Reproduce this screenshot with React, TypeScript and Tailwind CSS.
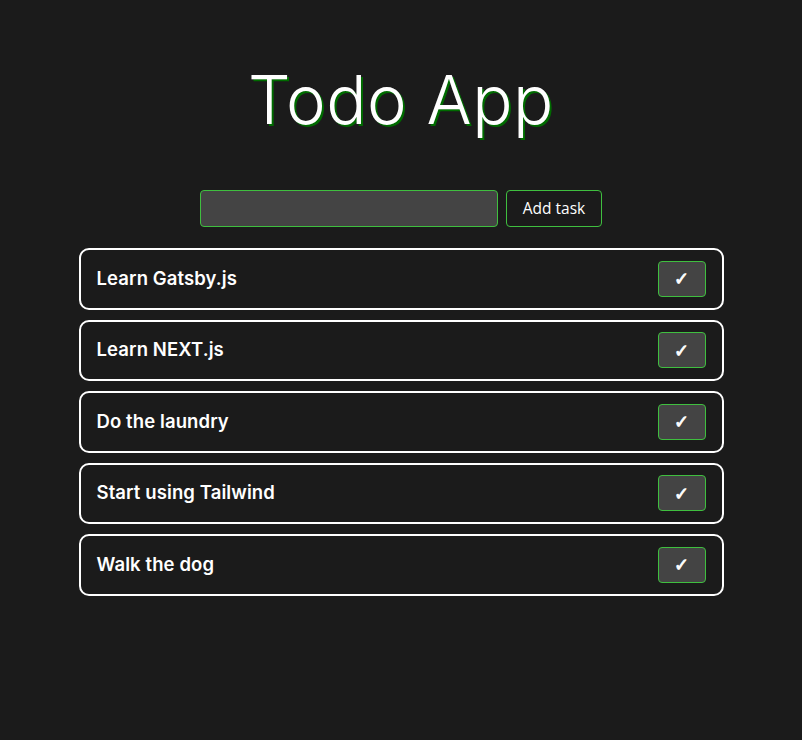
const tasks = [
  "Learn Gatsby.js",
  "Learn NEXT.js",
  "Do the laundry",
  "Start using Tailwind",
  "Walk the dog",
];

export default function App() {
  return (
    <div className="min-h-[740px] w-full bg-[#1b1b1b] flex flex-col items-center font-['Inter',sans-serif]">
      {/* title */}
      <h1 className="mt-[61px] text-[67px] leading-[78px] font-light text-white tracking-[0.5px] [text-shadow:2px_2px_0_#006b00]">
        Todo App
      </h1>

      {/* add form */}
      <div className="mt-[51px] flex gap-2">
        <input
          type="text"
          className="w-[298px] h-[37px] rounded bg-[#444] border border-[#3fbf3f] outline-none px-2 text-white"
        />
        <button className="w-[96px] h-[37px] rounded border border-[#3fbf3f] bg-[#1b1b1b] text-white text-[15.5px] font-['Open_Sans',sans-serif]">
          Add task
        </button>
      </div>

      {/* list */}
      <div className="mt-[21px] w-[645px] flex flex-col gap-[10px]">
        {tasks.map((t) => (
          <div
            key={t}
            className="h-[61.5px] flex items-center justify-between border-2 border-white rounded-[10px] pl-4 pr-4"
          >
            <span className="text-white text-[18.5px] font-semibold tracking-[0.1px]">{t}</span>
            <button className="w-[48px] h-[36px] rounded bg-[#444] border border-[#3fbf3f] text-white text-[18px] flex items-center justify-center font-['DejaVu_Sans',sans-serif] [-webkit-text-stroke:0.8px_white]">
              ✓
            </button>
          </div>
        ))}
      </div>
    </div>
  );
}
